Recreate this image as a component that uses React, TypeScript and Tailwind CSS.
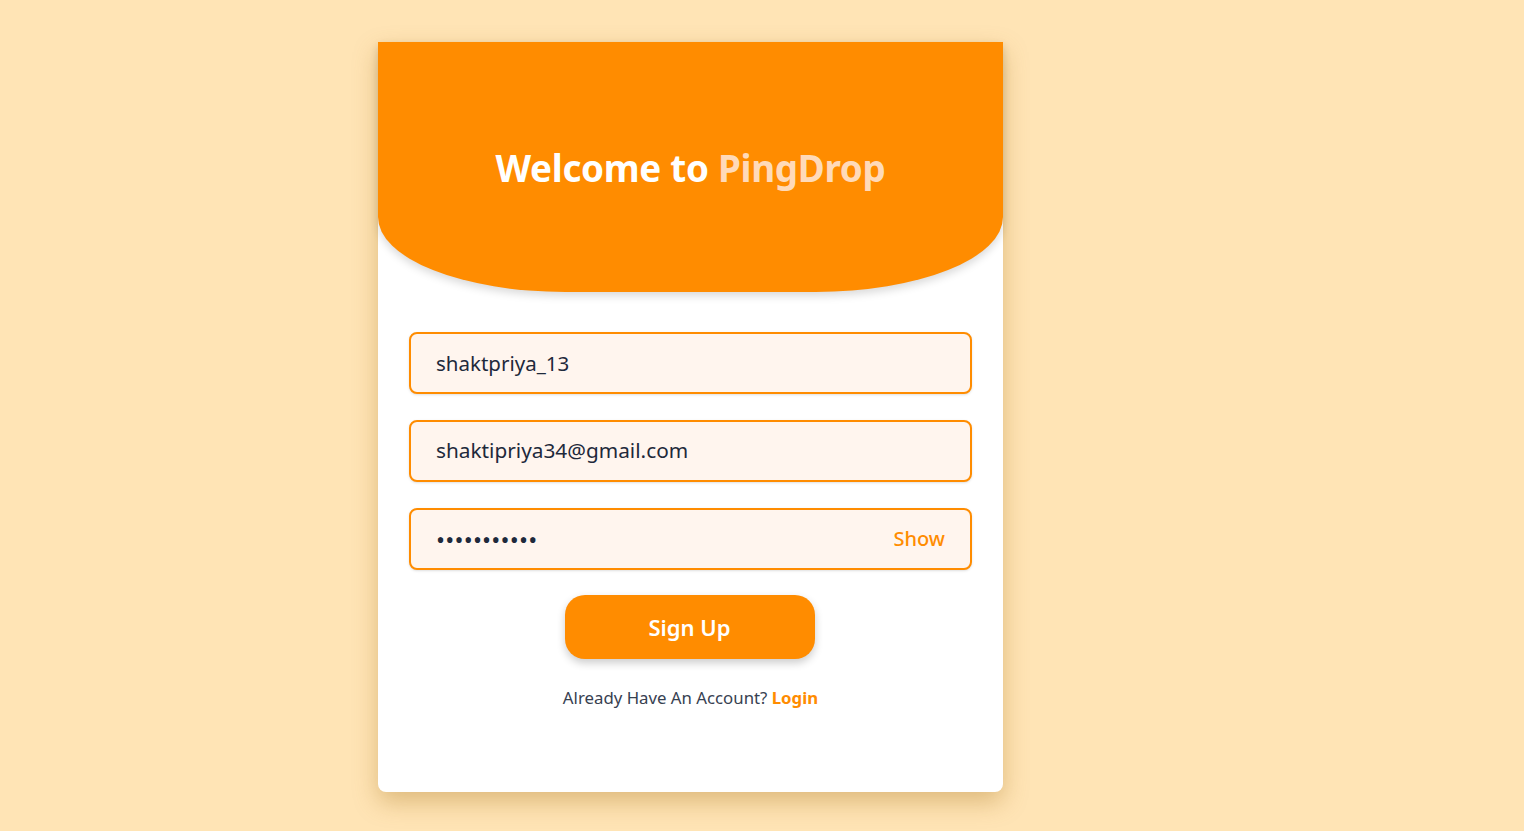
import React from "react";

export default function App() {
  return (
    <div
      className="min-h-[831px] w-full bg-[#ffe4b5] pt-[42px] pl-[378px]"
      style={{ fontFamily: '"Noto Sans", "Open Sans", sans-serif' }}
    >
      <div className="w-[625px] h-[750px] bg-white rounded-b-lg shadow-[0_10px_25px_rgba(160,110,20,0.35)] flex flex-col">
        <div className="h-[250px] bg-[#ff8c00] rounded-b-[30%] shadow-[0_4px_8px_rgba(0,0,0,0.15)] flex items-center justify-center pt-[4px]">
          <h1 className="text-[36.8px] font-bold text-white tracking-[-0.3px]">
            Welcome to <span className="text-[#ffdab9]">PingDrop</span>
          </h1>
        </div>
        <div className="px-[31px] pt-[40px] flex flex-col gap-[26px]">
          <div className="h-[62px] border-2 border-[#ff8c00] rounded-lg bg-[#fff5ee] flex items-center px-[25px] shadow-sm">
            <span className="text-[20.5px] text-[#1e293b]">shaktpriya_13</span>
          </div>
          <div className="h-[62px] border-2 border-[#ff8c00] rounded-lg bg-[#fff5ee] flex items-center px-[25px] shadow-sm">
            <span className="text-[20.8px] text-[#1e293b]">shaktipriya34@gmail.com</span>
          </div>
          <div className="h-[62px] border-2 border-[#ff8c00] rounded-lg bg-[#fff5ee] flex items-center justify-between px-[25px] shadow-sm">
            <span className="text-[24px] leading-none text-[#1e293b] tracking-[0.2px] mt-[2px]">•••••••••••</span>
            <span className="text-[20px] text-[#ff8c00] font-medium">Show</span>
          </div>
        </div>
        <div className="flex justify-center mt-[25px] pr-[2px]">
          <button className="w-[250px] h-[64px] rounded-[20px] bg-[#ff8c00] text-white text-[22px] font-semibold shadow-[0_4px_8px_rgba(0,0,0,0.2)]">
            Sign Up
          </button>
        </div>
        <p className="text-center mt-[26px] text-[16.8px] text-[#374151]">
          Already Have An Account? <span className="text-[#ff8c00] font-bold">Login</span>
        </p>
      </div>
    </div>
  );
}
